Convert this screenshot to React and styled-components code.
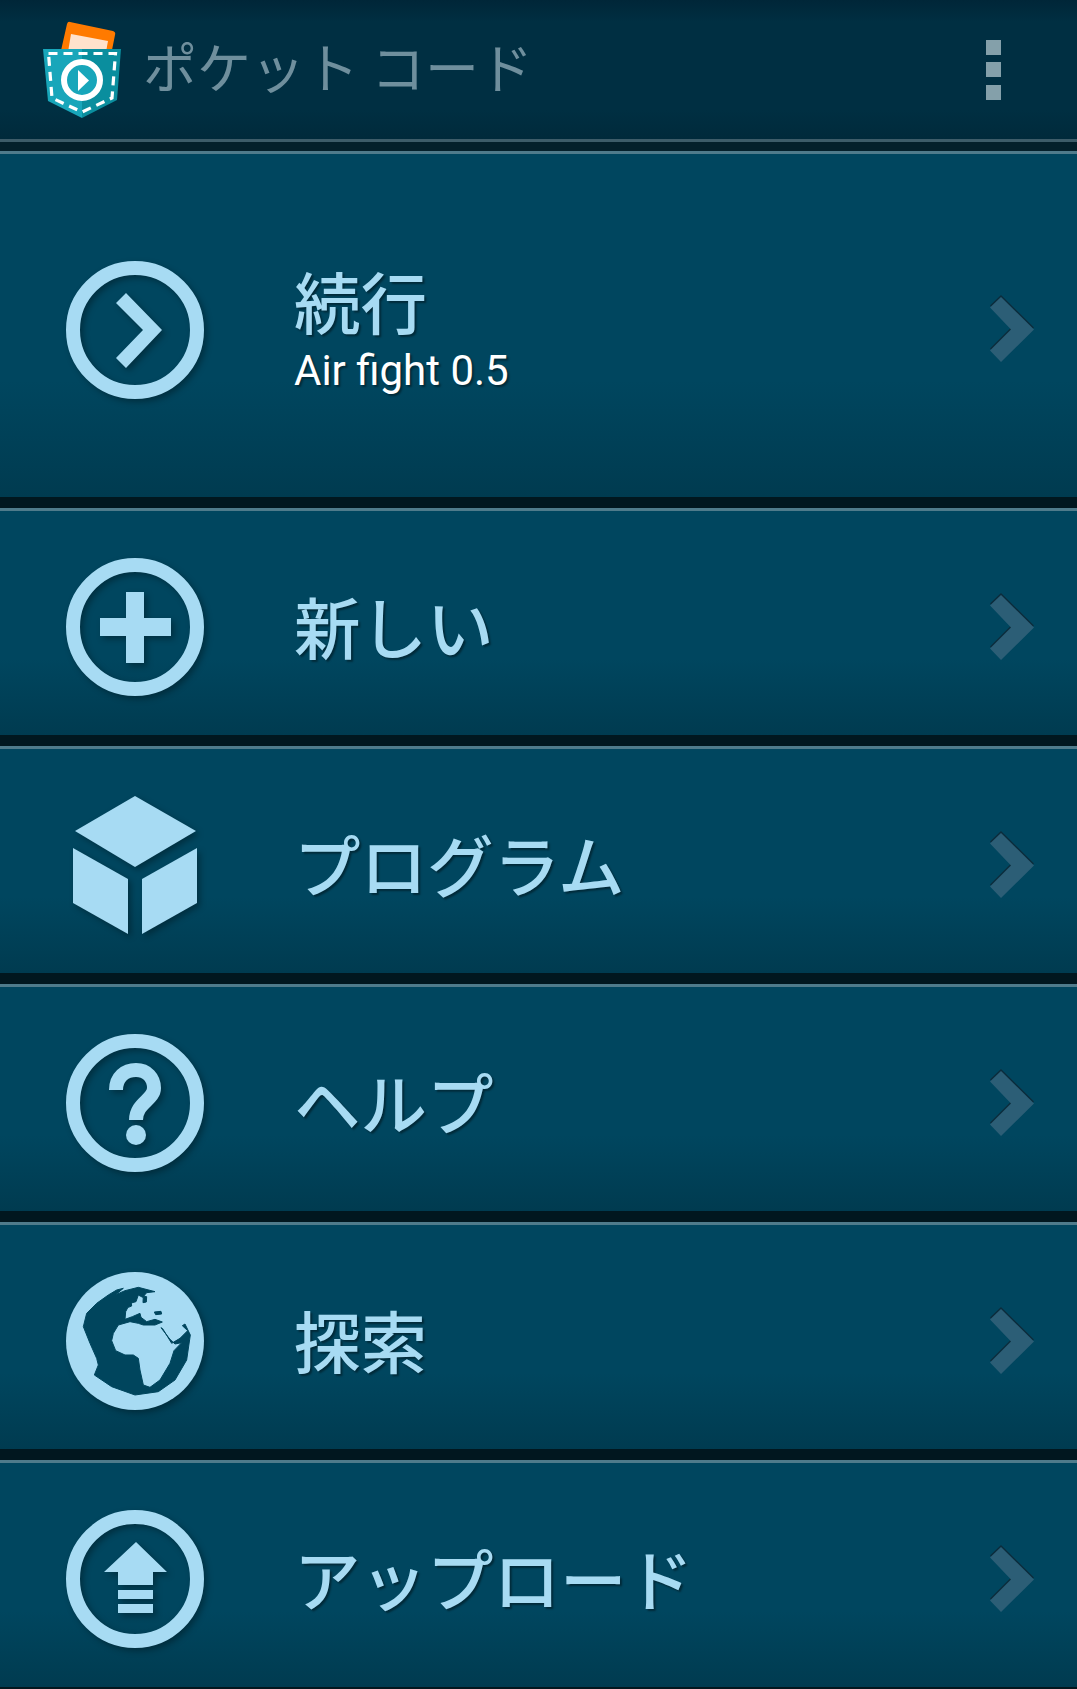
import React from 'react'
import styled, { createGlobalStyle } from 'styled-components'

const GlobalStyle = createGlobalStyle`
  html, body {
    margin: 0;
    padding: 0;
    background: #01171f;
  }
`

const Page = styled.div`
  width: 1077px;
  height: 1689px;
  overflow: hidden;
  background: #01171f;
  font-family: "Noto Sans CJK JP", "Noto Sans", sans-serif;
`

const Header = styled.header`
  display: flex;
  align-items: center;
  height: 139px;
  padding: 0 76px 0 38px;
  margin-bottom: 9px;
  background: linear-gradient(#002638 0, #002f42 22px, #002f42 110px, #002a3b 100%);
  border-bottom: 3px solid #3d5c69;
  box-shadow: 0 9px 0 #04202b;
`

const Logo = styled.svg`
  width: 84px;
  height: 100px;
  flex: none;
`

const AppTitle = styled.h1`
  flex: 1;
  margin: 0 0 8px 21px;
  font-size: 54px;
  font-weight: 400;
  line-height: 1;
  color: #6f8f9d;
  white-space: pre;
`

const Kebab = styled.div`
  display: flex;
  flex-direction: column;
  gap: 7.5px;
`

const KebabDot = styled.span`
  display: block;
  width: 15px;
  height: 15px;
  background: #84a0aa;
`

const Item = styled.div`
  display: flex;
  align-items: center;
  box-sizing: border-box;
  height: ${p => (p.$tall ? 346 : 227)}px;
  margin-bottom: 11px;
  padding: 8px 43px 0 60px;
  border-top: 3px solid #4f7b8b;
  background: linear-gradient(#00465f 0, #00465f 66%, #003b50 100%);
`

const IconBox = styled.svg`
  width: 150px;
  height: 150px;
  flex: none;
  overflow: visible;
  fill: #a7dbf3;
  filter: drop-shadow(3px 3px 3px rgba(0, 0, 0, 0.32));
`

const TextBlock = styled.div`
  flex: 1;
  display: flex;
  flex-direction: column;
  margin: 0 0 0 84px;
`

const Title = styled.div`
  padding-bottom: 4px;
  font-size: 66.5px;
  font-weight: 500;
  line-height: 74px;
  color: #a7dbf3;
  text-shadow: 2px 2px 2px rgba(0, 0, 0, 0.4);
  white-space: nowrap;
`

const Subtitle = styled.div`
  margin-top: 5px;
  font-family: Roboto, "Noto Sans", sans-serif;
  font-size: 42px;
  line-height: 50px;
  color: #ffffff;
  text-shadow: 2px 2px 2px rgba(0, 0, 0, 0.4);
`

const Chevron = styled.svg`
  width: 44px;
  height: 65px;
  flex: none;
  fill: #2c5e76;
  filter: drop-shadow(0 -1.5px 0.5px #0b2c3c);
`

const Ring = () => <circle cx="0" cy="0" r="62" fill="none" stroke="#a7dbf3" strokeWidth="14" />

const ContinueIcon = () => (
  <>
    <Ring />
    <polygon points="-9,-37 27,0 -9,38 -19,28 8,0 -19,-27" />
  </>
)

const NewIcon = () => (
  <>
    <Ring />
    <path d="M-9 -35H9V-9H36V9H9V36H-9V9H-35V-9H-9Z" />
  </>
)

const CubeIcon = () => (
  <>
    <polygon points="0,-69 61,-34 0,2 -60,-34" />
    <polygon points="-62,-17 -7,14 -7,69 -62,38" />
    <polygon points="7,14 62,-17 62,38 7,69" />
  </>
)

const HelpIcon = () => (
  <>
    <Ring />
    <path
      d="M-19 -13C-19 -26 -10 -33 1 -33C12 -33 19 -25 19 -15C19 -3 1 0 1 17"
      fill="none"
      stroke="#a7dbf3"
      strokeWidth="14"
    />
    <circle cx="1" cy="32" r="10" />
  </>
)

const GlobeIcon = () => (
  <>
    <circle cx="0" cy="0" r="69" />
    {/* ocean, traced from a 3x crop round the disc centre */}
    <g
      transform="scale(0.3333) translate(-180 -183)"
      fill="#00455d"
      stroke="#00455d"
      strokeWidth="3"
      strokeLinejoin="round"
    >
      <path d="M100 45L125 30L145 25L122 44L150 32L190 22L240 35L215 38L203 52L190 45L183 65L165 70L152 95L150 118L172 110L195 100L198 112L215 125L240 118L262 126L240 135L205 135L190 130L165 125L130 135L115 160L110 182L122 212L150 225L175 225L190 235L195 270L205 315L225 322L255 300L285 250L297 212L320 188L300 192L285 178L258 143L263 146L290 190L315 175L338 152L322 137L330 132L346 165L335 240L300 300L250 335L180 345L110 320L58 285L70 255L65 235L45 190L25 140L35 100L65 70Z" />
      <path d="M205 48L215 50L214 66L204 68ZM238 96L258 94L260 102L242 104ZM158 68L168 62L170 78L160 82Z" />
    </g>
  </>
)

const UploadIcon = () => (
  <>
    <Ring />
    <path d="M1 -37L32 -7H18V6H-17V-7H-31Z" />
    <rect x="-17" y="11" width="35" height="9" />
    <rect x="-17" y="25" width="35" height="9" />
  </>
)

const items = [
  { title: '続行', subtitle: 'Air fight 0.5', icon: ContinueIcon, tall: true },
  { title: '新しい', icon: NewIcon },
  { title: 'プログラム', icon: CubeIcon },
  { title: 'ヘルプ', icon: HelpIcon },
  { title: '探索', icon: GlobeIcon },
  { title: 'アップロード', icon: UploadIcon },
]

const App = () => {
  return (
    <Page>
      <GlobalStyle />
      <Header>
        <Logo viewBox="38 20 84 100">
          <path d="M70 22L113 31Q116 32 115 35L111 55H60L67 24Q68 21 70 22Z" fill="#ff7a00" />
          <polygon points="71,34 108,41 106,52 68,52" fill="#ffe2cc" />
          <polygon points="43,49 82,49 82,118 48,101" fill="#18a6ba" />
          <polygon points="82,49 121,49 117,100 82,118" fill="#0a8e9e" />
          <path
            d="M48.5 53.5H115.5L112 98L82 112L52 98Z"
            fill="none"
            stroke="#fff"
            strokeWidth="3.2"
            strokeDasharray="9 6"
          />
          <circle cx="82" cy="80" r="18" fill="#18a6ba" stroke="#fff" strokeWidth="6" />
          <polygon points="78,70 89,80.5 78,91" fill="#fff" />
        </Logo>
        <AppTitle>ポケット コード</AppTitle>
        <Kebab>
          <KebabDot />
          <KebabDot />
          <KebabDot />
        </Kebab>
      </Header>
      {items.map(({ title, subtitle, icon: Icon, tall }) => (
        <Item key={title} $tall={tall}>
          <IconBox viewBox="-75 -75 150 150">
            <Icon />
          </IconBox>
          <TextBlock>
            <Title>{title}</Title>
            {subtitle && <Subtitle>{subtitle}</Subtitle>}
          </TextBlock>
          <Chevron viewBox="0 0 44 65">
            <polygon points="11,0 44,32.5 11,65 0,53.5 21,32.5 0,10.5" />
          </Chevron>
        </Item>
      ))}
    </Page>
  )
}

export default App
